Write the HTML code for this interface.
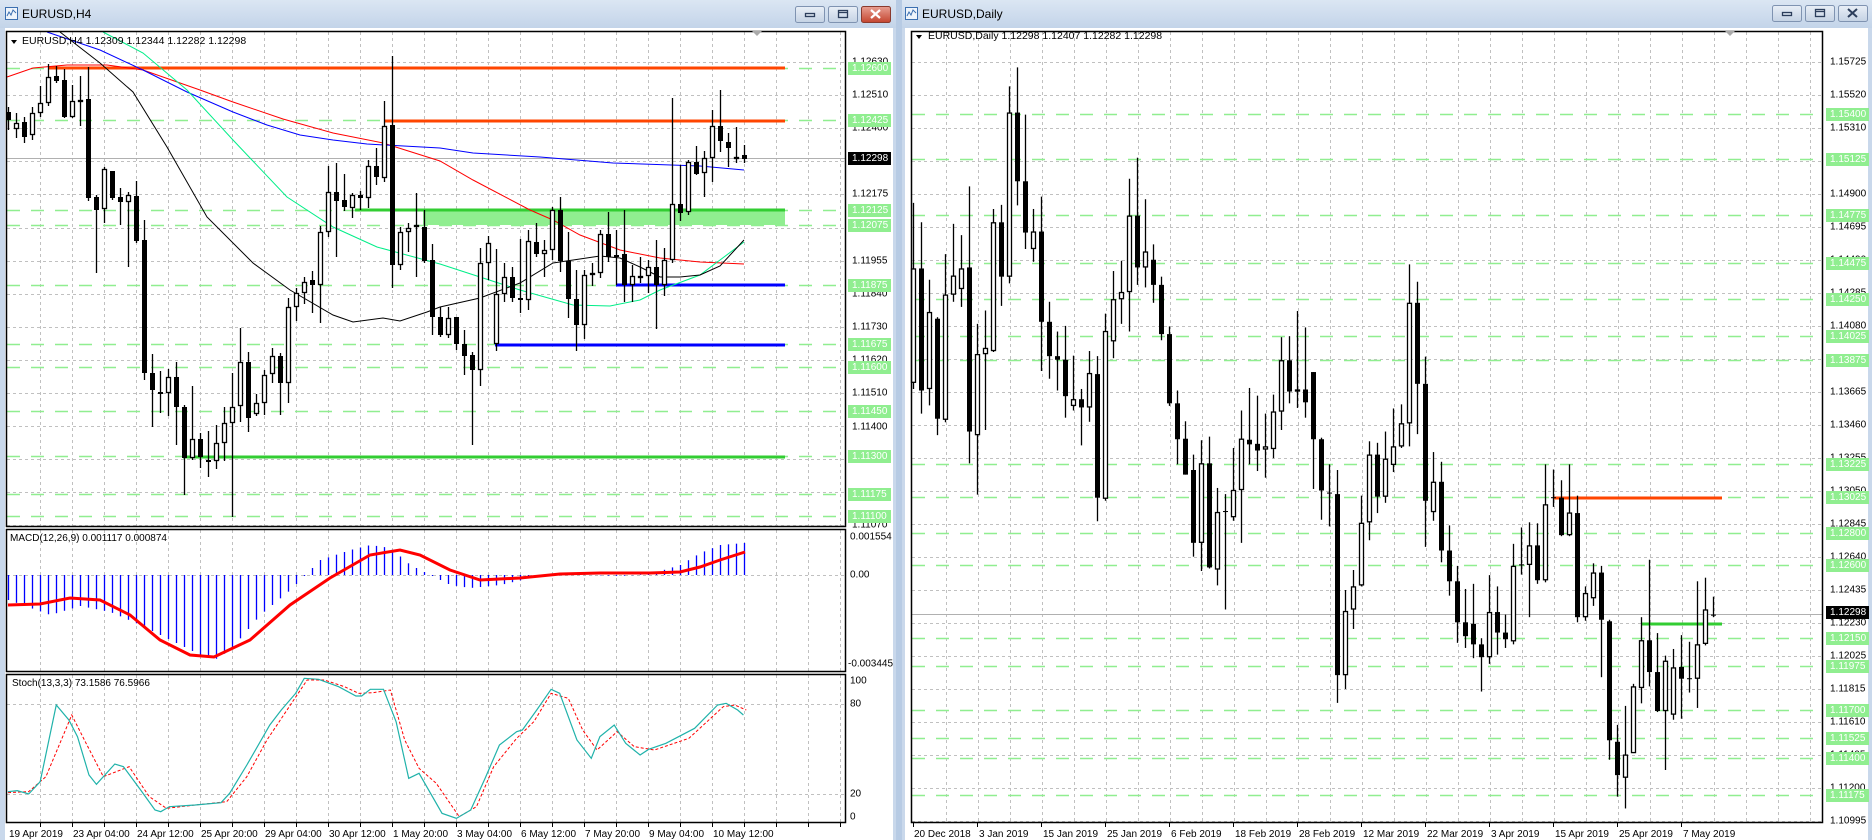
<!DOCTYPE html>
<html><head><meta charset="utf-8"><style>
html,body{margin:0;padding:0;background:#c9d8eb;}
svg{display:block;font-family:"Liberation Sans",sans-serif;}
</style></head><body>
<svg id="s" width="1872" height="840" viewBox="0 0 1872 840" xmlns="http://www.w3.org/2000/svg">
<defs>
<linearGradient id="tb" x1="0" y1="0" x2="0" y2="1"><stop offset="0" stop-color="#dbe6f3"/><stop offset="1" stop-color="#c3d4e9"/></linearGradient>
<linearGradient id="btn" x1="0" y1="0" x2="0" y2="1"><stop offset="0" stop-color="#e9eff7"/><stop offset="1" stop-color="#c4d2e4"/></linearGradient>
<linearGradient id="cls" x1="0" y1="0" x2="0" y2="1"><stop offset="0" stop-color="#e8a093"/><stop offset="1" stop-color="#c4452f"/></linearGradient>
</defs>
<rect x="0" y="0" width="1872" height="840" fill="#c9d8eb"/>
<!-- left window -->
<rect x="0" y="0" width="897" height="28" fill="url(#tb)"/>
<rect x="5" y="28" width="888" height="812" fill="#fff"/>
<!-- right window -->
<rect x="901" y="0" width="971" height="28" fill="url(#tb)"/>
<rect x="905" y="28" width="963" height="812" fill="#fff"/>
<rect x="896" y="0" width="6" height="840" fill="#b7cbe4"/>
<!-- title icons -->
<g stroke="#3b6fb0" fill="#eef4fb" stroke-width="1">
<rect x="5.5" y="7.5" width="12" height="12"/><rect x="905.5" y="7.5" width="12" height="12"/>
</g>
<g stroke="#3b6fb0" fill="none" stroke-width="1">
<path d="M7 16 L9 12 L11 15 L13 10 L16 13"/><path d="M907 16 L909 12 L911 15 L913 10 L916 13"/>
</g>
<text x="22" y="18" font-size="12" fill="#000">EURUSD,H4</text>
<text x="922" y="18" font-size="12" fill="#000">EURUSD,Daily</text>
<!-- buttons left -->
<g stroke="#7f93b1" stroke-width="1">
<rect x="795.5" y="6.5" width="29" height="16" rx="2" fill="url(#btn)"/>
<rect x="828.5" y="6.5" width="29" height="16" rx="2" fill="url(#btn)"/>
<rect x="861.5" y="6.5" width="29" height="16" rx="2" fill="url(#cls)" stroke="#8a3a2e"/>
<rect x="1772.5" y="5.5" width="29" height="16" rx="2" fill="url(#btn)"/>
<rect x="1805.5" y="5.5" width="29" height="16" rx="2" fill="url(#btn)"/>
<rect x="1838.5" y="5.5" width="29" height="16" rx="2" fill="url(#btn)"/>
</g>
<g fill="none" stroke="#2c3e5c" stroke-width="1.3">
<rect x="805.5" y="13.5" width="9" height="3"/><rect x="838.5" y="10.5" width="9" height="7"/><path d="M839 12.5 H847"/>
<rect x="1782.5" y="12.5" width="9" height="3"/><rect x="1815.5" y="9.5" width="9" height="7"/><path d="M1816 11.5 H1824"/>
<path d="M1848 9 L1857 17 M1857 9 L1848 17" stroke-width="2"/>
</g>
<path d="M871 10 L880 18 M880 10 L871 18" stroke="#fff" stroke-width="2.2"/>

<g id="grid"></g>
<g id="levels"></g>
<g id="draw"></g>

<!-- frames -->
<g fill="none" stroke="#000" stroke-width="1.5">
<rect x="6.5" y="31.5" width="839" height="495"/>
<rect x="6.5" y="529.5" width="839" height="142"/>
<rect x="6.5" y="674.5" width="839" height="148"/>
<rect x="911.5" y="31.5" width="911" height="791"/>
</g>
<path d="M752 31 L762 31 L757 36 Z" fill="#aaa"/>
<path d="M1725 31 L1735 31 L1730 36 Z" fill="#aaa"/>

<!-- chart headers -->
<path d="M11 40 L17 40 L14 44 Z" fill="#000"/>
<text x="22" y="44" font-size="10.5" fill="#000">EURUSD,H4  1.12309 1.12344 1.12282 1.12298</text>
<path d="M916 35 L922 35 L919 39 Z" fill="#000"/>
<text x="928" y="39" font-size="10.5" fill="#000">EURUSD,Daily  1.12298 1.12407 1.12282 1.12298</text>
<text x="10" y="541" font-size="10" fill="#000">MACD(12,26,9) 0.001117 0.000874</text>
<text x="12" y="686" font-size="10" fill="#000">Stoch(13,3,3) 73.1586 76.5966</text>

<!-- left axis labels -->
<g font-size="10" fill="#000" dominant-baseline="central">
<text x="852" y="62">1.12630</text><text x="852" y="95">1.12510</text><text x="852" y="128">1.12400</text>
<text x="852" y="161">1.12290</text><text x="852" y="194">1.12175</text><text x="852" y="228">1.12065</text>
<text x="852" y="261">1.11955</text><text x="852" y="294">1.11840</text><text x="852" y="327">1.11730</text>
<text x="852" y="360">1.11620</text><text x="852" y="393">1.11510</text><text x="852" y="427">1.11400</text>
<text x="852" y="460">1.11290</text><text x="852" y="493">1.11175</text><text x="852" y="525">1.11070</text>
<text x="850" y="537">0.001554</text><text x="850" y="575">0.00</text><text x="848" y="664">-0.003445</text>
<text x="850" y="681">100</text><text x="850" y="704">80</text><text x="850" y="794">20</text><text x="850" y="817">0</text>
</g>
<g id="lgl" font-size="10" dominant-baseline="central" fill="#fff"></g>
<g font-size="10" dominant-baseline="central">
<rect x="848" y="152" width="43" height="13" fill="#000"/><text x="852" y="158.5" fill="#fff">1.12298</text>
</g>
<!-- right axis labels -->
<g font-size="10" fill="#000" dominant-baseline="central">
<text x="1830" y="62">1.15725</text><text x="1830" y="95">1.15520</text><text x="1830" y="128">1.15310</text>
<text x="1830" y="161">1.15105</text><text x="1830" y="194">1.14900</text><text x="1830" y="227">1.14695</text>
<text x="1830" y="260">1.14490</text><text x="1830" y="293">1.14285</text><text x="1830" y="326">1.14080</text>
<text x="1830" y="359">1.13870</text><text x="1830" y="392">1.13665</text><text x="1830" y="425">1.13460</text>
<text x="1830" y="458">1.13255</text><text x="1830" y="491">1.13050</text><text x="1830" y="524">1.12845</text>
<text x="1830" y="557">1.12640</text><text x="1830" y="590">1.12435</text><text x="1830" y="623">1.12230</text>
<text x="1830" y="656">1.12025</text><text x="1830" y="689">1.11815</text><text x="1830" y="722">1.11610</text>
<text x="1830" y="755">1.11405</text><text x="1830" y="788">1.11200</text><text x="1830" y="821">1.10995</text>
</g>
<g id="rgl" font-size="10" dominant-baseline="central" fill="#fff"></g>
<g font-size="10" dominant-baseline="central">
<rect x="1826" y="606" width="43" height="13" fill="#000"/><text x="1830" y="612.5" fill="#fff">1.12298</text>
</g>
<!-- time axes -->
<g font-size="10" fill="#000">
<text x="9" y="837">19 Apr 2019</text><text x="73" y="837">23 Apr 04:00</text><text x="137" y="837">24 Apr 12:00</text>
<text x="201" y="837">25 Apr 20:00</text><text x="265" y="837">29 Apr 04:00</text><text x="329" y="837">30 Apr 12:00</text>
<text x="393" y="837">1 May 20:00</text><text x="457" y="837">3 May 04:00</text><text x="521" y="837">6 May 12:00</text>
<text x="585" y="837">7 May 20:00</text><text x="649" y="837">9 May 04:00</text><text x="713" y="837">10 May 12:00</text>
<text x="914" y="837">20 Dec 2018</text><text x="979" y="837">3 Jan 2019</text><text x="1043" y="837">15 Jan 2019</text>
<text x="1107" y="837">25 Jan 2019</text><text x="1171" y="837">6 Feb 2019</text><text x="1235" y="837">18 Feb 2019</text>
<text x="1299" y="837">28 Feb 2019</text><text x="1363" y="837">12 Mar 2019</text><text x="1427" y="837">22 Mar 2019</text>
<text x="1491" y="837">3 Apr 2019</text><text x="1555" y="837">15 Apr 2019</text><text x="1619" y="837">25 Apr 2019</text>
<text x="1683" y="837">7 May 2019</text>
</g>
</svg>
<script>
var NS="http://www.w3.org/2000/svg";
function E(p,t,a){var e=document.createElementNS(NS,t);for(var k in a)e.setAttribute(k,a[k]);document.getElementById(p).appendChild(e);return e;}
function line(p,x1,y1,x2,y2,c,w,d){var a={x1:x1,y1:y1,x2:x2,y2:y2,stroke:c,"stroke-width":w||1};if(d)a["stroke-dasharray"]=d;return E(p,"line",a);}
function poly(p,pts,c,w,d){var a={points:pts.map(function(q){return q[0]+","+q[1]}).join(" "),fill:"none",stroke:c,"stroke-width":w};if(d)a["stroke-dasharray"]=d;E(p,"polyline",a);}
var G="#c0c0c0",GD="3,3",LG="#90ee90";
// left grids
for(var k=1;k<=26;k++){var x=8+32*k+0.5;if(x>845)break;line("grid",x,32,x,527,G,1,GD);line("grid",x,530,x,672,G,1,GD);line("grid",x,675,x,823,G,1,GD);line("grid",x,823,x,827,"#000",1);}
for(var k=0;k<15;k++){var y=Math.round(62+33.1*k)+0.5;line("grid",7,y,845,y,G,1,GD);}
[575.5,704.5,794.5].forEach(function(y){line("grid",7,y,845,y,G,1,GD);});
// right grids
for(var k=29;k<=56;k++){var x=18+32*k+0.5;line("grid",x,32,x,823,G,1,GD);}
for(var k=0;k<24;k++){var y=62+33*k+0.5;line("grid",912,y,1823,y,G,1,GD);}
for(var k=0;k<13;k++){var x=913+64*k+0.5;line("grid",x,823,x,827,"#000",1);}
// current price lines
line("grid",7,158.5,845,158.5,"#b0b0b0",1);line("grid",912,614.5,1823,614.5,"#b0b0b0",1);
// levels
var ll=[1.126,1.12425,1.12125,1.12075,1.11875,1.11675,1.116,1.1145,1.113,1.11175,1.111];
ll.forEach(function(p){var y=Math.round(68+(1.126-p)*29867)+0.5;line("levels",7,y,845,y,LG,1.5,"13,11");
E("lgl","rect",{x:848,y:y-6.5,width:43,height:13,fill:LG});var t=E("lgl","text",{x:852,y:y});t.textContent=p.toFixed(5);});
var rl=[1.154,1.15125,1.14775,1.14475,1.1425,1.14025,1.13875,1.13225,1.13025,1.128,1.126,1.1215,1.11975,1.117,1.11525,1.114,1.11175];
rl.forEach(function(p){var y=Math.round(62+(1.15725-p)*16100)+0.5;line("levels",912,y,1823,y,LG,1.5,"13,11");
E("rgl","rect",{x:1826,y:y-6.5,width:43,height:13,fill:LG});var t=E("rgl","text",{x:1830,y:y});t.textContent=p.toFixed(5);});
// left objects
E("draw","rect",{x:423,y:210,width:362,height:15,fill:LG});
line("draw",355,210,785,210,"#32cd32",3);
line("draw",48,68,785,68,"#ff4500",3);
line("draw",385,121,785,121,"#ff4500",3);
line("draw",616,285,785,285,"#0000ff",3);
line("draw",495,345,785,345,"#0000ff",3);
line("draw",183,457,785,457,"#32cd32",3);
// MAs
poly("draw",[[7,77],[33,68],[67,65],[107,65],[143,70],[200,90],[233,102],[283,119],[333,133],[383,143],[440,161],[473,180],[530,210],[553,220],[580,235],[620,250],[660,258],[700,262],[744,264]],"#ff0000",1);
poly("draw",[[47,32],[100,50],[143,70],[187,92],[233,112],[267,125],[300,135],[333,140],[367,144],[440,148],[473,153],[540,157],[613,163],[700,166],[744,170]],"#0000ff",1);
poly("draw",[[103,32],[143,53],[187,90],[233,140],[287,197],[333,227],[377,247],[440,264],[520,290],[573,305],[610,306],[640,300],[660,290],[700,275],[744,242]],"#00ee88",1);
poly("draw",[[60,32],[100,63],[133,92],[167,147],[207,217],[253,263],[290,290],[333,315],[353,322],[383,318],[400,321],[427,312],[440,307],[480,298],[520,283],[553,263],[600,256],[620,258],[640,267],[660,277],[680,277],[700,275],[720,266],[744,240]],"#000",1);
// H4 candles
var H=[[112,120,107,130,0],[123,129,113,138,1],[122,137,117,143,0],[113,135,107,140,1],[103,113,86,117,1],[77,103,64,106,1],[76,81,66,83,0],[80,117,69,118,0],[101,117,85,118,1],[100,102,76,126,1],[99,198,67,201,0],[197,210,195,273,0],[169,209,167,223,1],[171,198,171,200,0],[197,202,188,225,0],[195,202,192,267,1],[196,241,181,243,0],[240,373,220,380,0],[373,390,354,427,0],[392,394,371,413,0],[377,393,369,416,1],[377,407,362,445,0],[407,458,405,495,0],[439,458,386,460,1],[439,457,433,468,0],[460,462,431,477,0],[443,461,425,469,1],[423,443,407,461,1],[407,423,373,517,1],[362,406,328,422,1],[362,418,352,432,0],[403,414,394,416,1],[375,403,370,415,1],[356,374,348,383,1],[356,383,353,415,0],[307,383,298,403,1],[293,307,288,321,1],[282,293,277,304,1],[280,285,271,313,0],[232,285,226,323,1],[192,232,166,237,1],[192,201,163,257,0],[200,207,174,211,0],[195,208,193,218,1],[195,198,191,210,0],[166,198,160,208,1],[166,177,148,185,0],[126,178,101,182,1],[125,265,56,288,0],[232,265,227,270,1],[228,232,223,252,1],[225,227,193,277,1],[227,261,210,263,0],[260,317,244,335,0],[317,335,307,337,0],[318,335,307,338,1],[317,344,317,350,0],[344,356,330,375,0],[355,370,352,445,0],[263,370,248,386,1],[243,263,236,280,1],[294,344,249,351,1],[277,294,263,302,1],[277,298,267,302,0],[298,300,239,313,0],[241,300,230,310,1],[242,254,223,257,0],[250,254,240,277,1],[210,250,207,260,1],[210,261,197,272,0],[261,299,232,318,0],[299,325,270,351,0],[275,325,270,339,1],[273,275,263,286,1],[234,273,230,278,1],[234,257,212,262,0],[255,257,230,285,0],[254,285,210,302,0],[276,285,265,302,1],[276,278,257,283,1],[267,276,260,293,1],[267,285,240,329,0],[260,285,248,296,1],[204,260,98,263,1],[204,213,165,221,0],[162,212,160,215,1],[162,174,146,175,0],[158,173,151,197,1],[126,158,110,182,1],[126,141,90,152,0],[142,148,133,167,0],[157,159,127,163,1],[155,159,145,163,0]];
function candle(x,c){line("draw",x+0.5,c[2],x+0.5,c[3],"#000",1.3);var h=Math.max(c[1]-c[0],1);
if(c[4])E("draw","rect",{x:x-1.5,y:c[0]+0.5,width:4,height:Math.max(h-1,1),fill:"#fff",stroke:"#000","stroke-width":1.3});
else E("draw","rect",{x:x-2,y:c[0],width:5,height:h,fill:"#000"});}
H.forEach(function(c,i){candle(8+8*i,c);});
// MACD
function interp(pts,x){for(var i=1;i<pts.length;i++){if(x<=pts[i][0]){var a=pts[i-1],b=pts[i];return a[1]+(b[1]-a[1])*(x-a[0])/(b[0]-a[0]);}}return pts[pts.length-1][1];}
var mh=[[8,600],[50,615],[80,606],[110,612],[140,625],[170,640],[200,655],[214,660],[230,650],[260,615],[290,590],[320,560],[350,550],[370,545],[390,548],[410,565],[430,575],[450,585],[470,588],[500,585],[530,578],[560,574],[590,575],[620,576],[650,574],[680,565],[700,553],[720,545],[744,543]];
for(var i=0;i<93;i++){var x=8+8*i;line("draw",x+0.5,575,x+0.5,interp(mh,x),"#0000ff",1.3);}
var ms=[[8,605],[40,604],[70,598],[100,600],[130,615],[160,640],[190,655],[214,657],[250,640],[290,605],[330,578],[370,555],[400,550],[420,555],[450,570],[480,580],[520,578],[560,574],[600,573],[650,573],[680,572],[700,567],[720,560],[745,552]];
poly("draw",ms,"#ff0000",3);
// Stoch
function cv(a){return a.map(function(q){return [q[0]/1.742,640+q[1]/3];});}
var sm=[[14,455],[30,452],[50,462],[70,425],[98,195],[120,240],[135,290],[155,405],[168,433],[200,372],[215,380],[245,450],[270,510],[280,515],[295,500],[340,495],[385,488],[400,460],[430,375],[470,255],[490,210],[515,160],[530,115],[555,118],[590,140],[620,168],[630,168],[645,148],[668,148],[690,245],[712,415],[730,400],[770,520],[795,535],[820,510],[845,415],[870,315],[900,275],[910,270],[935,210],[960,148],[975,160],[1005,300],[1030,355],[1045,290],[1070,255],[1090,310],[1115,345],[1130,328],[1160,310],[1210,265],[1250,195],[1265,190],[1285,210],[1295,225]];
var ss=[[14,458],[50,455],[80,410],[125,225],[150,310],[180,410],[225,380],[260,470],[290,505],[340,495],[395,485],[430,410],[465,300],[500,210],[535,120],[565,120],[600,140],[625,160],[650,158],[680,150],[705,300],[730,385],[760,430],[800,530],[830,500],[860,380],[900,295],[930,245],[960,160],[990,175],[1015,270],[1040,330],[1075,275],[1105,320],[1140,330],[1200,295],[1260,200],[1280,195],[1300,210]];
poly("draw",cv(ss),"#ff0000",1,"3,2");
poly("draw",cv(sm),"#20b2aa",1.2);
// Daily
line("draw",1553,498,1722,498,"#ff4500",3);
line("draw",1642,624,1722,624,"#32cd32",3);
var D=[[465,688,337,700,1],[465,703,375,748,0],[550,700,487,732,1],[563,758,560,790,0],[516,760,437,765,1],[479,516,378,530,1],[465,505,400,540,1],[463,783,305,845,0],[632,790,573,906,1],[620,632,547,780,1],[375,626,349,628,1],[375,481,341,538,0],[161,481,110,494,1],[161,295,73,342,0],[295,395,165,427,0],[393,427,349,452,1],[393,569,325,665,0],[569,636,530,680,0],[636,643,588,703,0],[643,714,577,756,0],[720,733,635,742,1],[720,736,700,810,0],[669,736,626,764,1],[671,912,636,958,0],[587,914,553,918,1],[525,607,470,640,1],[511,525,450,573,1],[362,511,290,588,1],[362,463,249,497,0],[432,463,330,502,1],[448,497,418,532,0],[497,593,481,605,0],[593,728,578,733,0],[728,798,703,847,0],[797,867,763,867,0],[858,1000,828,1027,0],[845,1000,800,1055,1],[845,1048,793,1050,0],[940,1052,893,1083,1],[938,940,905,1130,0],[897,950,815,957,1],[797,897,742,1000,1],[799,808,698,847,0],[807,820,713,860,0],[812,818,748,873,1],[744,817,711,835,1],[644,744,599,780,1],[644,705,597,728,0],[701,705,548,737,1],[701,726,580,756,0],[667,798,667,895,0],[798,898,795,955,0],[902,904,847,968,0],[905,1258,858,1312,0],[1133,1258,1092,1285,1],[1085,1130,1053,1168,1],[961,1083,908,1085,1],
[828,960,802,995,1],[828,910,805,942,0],[836,910,783,922,1],[812,848,738,862,1],[767,812,730,815,1],[532,767,457,812,1],[532,690,491,788,0],[690,918,637,1008,0],[881,940,823,957,1],[881,1015,842,1038,0],[1015,1075,966,1103,0],[1075,1155,1045,1195,0],[1155,1182,1090,1205,0],[1158,1198,1080,1225,0],[1198,1223,1186,1290,0],[1135,1223,1063,1236,1],[1135,1175,1085,1218,0],[1175,1188,1140,1205,0],[1045,1192,1002,1198,1],[1042,1044,970,1062,0],[1005,1043,960,1145,1],[1005,1073,962,1080,0],[925,1073,847,1077,1],[911,913,857,930,0],[912,985,878,987,0],[941,985,847,987,1],[942,1145,908,1155,0],[1098,1145,1085,1152,1],[1058,1108,1040,1123,1],[1058,1150,1045,1262,0],[1153,1385,1150,1423,0],[1388,1453,1355,1495,0],[1413,1458,1318,1518,1],[1280,1410,1275,1410,1],[1190,1283,1145,1313,1],[1190,1252,1033,1280,0],[1252,1328,1176,1330,0],[1230,1328,1220,1443,1],[1243,1335,1207,1345,1],[1242,1265,1180,1343,0],[1264,1266,1193,1292,0],[1198,1265,1075,1322,1],[1130,1197,1068,1200,1],[1140,1142,1105,1145,0]];
D.forEach(function(c,k){var cc=[30+c[0]/1.95,30+c[1]/1.95,30+c[2]/1.95,30+c[3]/1.95,c[4]];candle(913+8*k,cc);});
</script>
</body></html>
